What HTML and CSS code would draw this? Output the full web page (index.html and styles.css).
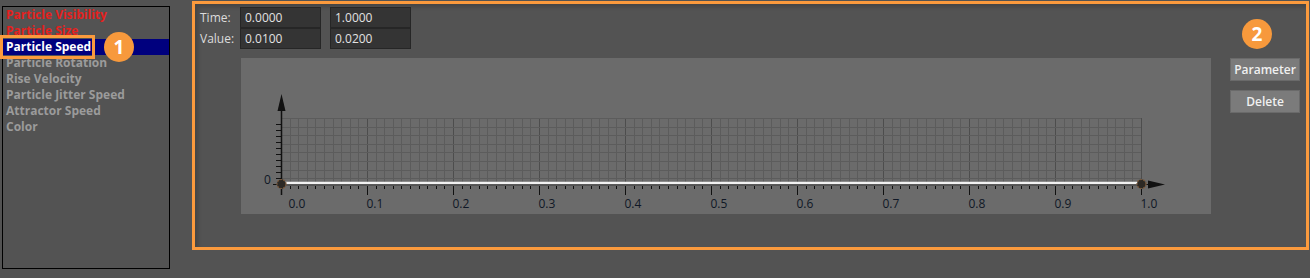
FILE: index.html
```html
<!DOCTYPE html>
<html lang="en">
<head>
<meta charset="UTF-8">
<title>Curve Editor</title>
<link rel="stylesheet" href="styles.css">
</head>
<body>

<div class="layout">
  <!-- список параметров -->
  <aside class="param-list">
    <div class="param-item used">Particle Visibility</div>
    <div class="param-item used">Particle Size</div>
    <div class="param-item selected"><span class="mark">Particle Speed</span></div>
    <div class="param-item">Particle Rotation</div>
    <div class="param-item">Rise Velocity</div>
    <div class="param-item">Particle Jitter Speed</div>
    <div class="param-item">Attractor Speed</div>
    <div class="param-item">Color</div>
    <span class="badge badge-one">1</span>
  </aside>

  <!-- редактор кривой -->
  <section class="editor">
    <div class="editor-main">
      <div class="key-form">
        <div class="key-row">
          <span class="key-label">Time:</span>
          <input class="key-input" type="text" value="0.0000">
          <input class="key-input" type="text" value="1.0000">
        </div>
        <div class="key-row">
          <span class="key-label">Value:</span>
          <input class="key-input" type="text" value="0.0100">
          <input class="key-input" type="text" value="0.0200">
        </div>
      </div>

      <div class="graph">
        <svg id="graph" width="970" height="156" viewBox="0 0 970 156"></svg>
      </div>
    </div>

    <div class="editor-side">
      <button class="btn">Parameter</button>
      <button class="btn">Delete</button>
    </div>
    <span class="badge badge-two">2</span>
  </section>
</div>

<script>
var svg = document.getElementById('graph');
var x0 = 40, x1 = 900, baseY = 126, gridTop = 60;
var out = '';

// сетка
for (var i = 0; i <= 100; i++) {
  var x = Math.round(x0 + i * 8.6) + 0.5;
  var major = i % 10 === 0;
  out += '<line x1="' + x + '" y1="' + gridTop + '" x2="' + x + '" y2="' + baseY + '" stroke="' + (major ? '#4d4d4d' : '#5c5c5c') + '" stroke-width="1"/>';
}
for (var y = gridTop; y < baseY - 2; y += 8.6) {
  var yy = Math.round(y) + 0.5;
  out += '<line x1="' + x0 + '" y1="' + yy + '" x2="' + x1 + '" y2="' + yy + '" stroke="#5c5c5c" stroke-width="1"/>';
}

// деления по X
for (var i = 0; i <= 100; i++) {
  var x = Math.round(x0 + i * 8.6) + 0.5;
  var major = i % 10 === 0;
  out += '<line x1="' + x + '" y1="128" x2="' + x + '" y2="' + (major ? 137 : 131) + '" stroke="#111" stroke-width="1"/>';
  if (major) {
    var lx = i === 0 ? x + 7 : x - 1;
    out += '<text x="' + lx + '" y="150" class="axis-label">' + (i / 100).toFixed(1) + '</text>';
  }
}

// деления по Y
for (var t = 66; t <= 120; t += 6) {
  out += '<line x1="35" y1="' + (t + 0.5) + '" x2="40" y2="' + (t + 0.5) + '" stroke="#111" stroke-width="1"/>';
}
out += '<text x="23" y="126" class="axis-label">0</text>';
out += '<line x1="32" y1="126.5" x2="40" y2="126.5" stroke="#111" stroke-width="1"/>';

// оси
out += '<line x1="40.5" y1="50" x2="40.5" y2="137" stroke="#111" stroke-width="1.5"/>';
out += '<polygon points="40.5,36 36.5,53 44.5,53" fill="#111"/>';
out += '<line x1="40" y1="126.5" x2="910" y2="126.5" stroke="#111" stroke-width="1.2"/>';
out += '<polygon points="924,126.5 907,122.5 907,130.5" fill="#111"/>';

// кривая
out += '<line x1="40" y1="127" x2="900" y2="127" stroke="#3c3c3c" stroke-width="1"/>';
out += '<line x1="40" y1="125" x2="900" y2="125" stroke="#f2f2f2" stroke-width="2.5"/>';
out += '<circle cx="40.5" cy="126" r="4.5" fill="#2d2924" stroke="#7b5a3c" stroke-width="1.2" stroke-dasharray="2 1.2"/>';
out += '<circle cx="900.5" cy="126" r="4.5" fill="#2d2924" stroke="#7b5a3c" stroke-width="1.2" stroke-dasharray="2 1.2"/>';

svg.innerHTML = out;
</script>

</body>
</html>
```

FILE: styles.css
```css
body, html {
  margin: 0;
  padding: 0;
  background-color: #535353;
  font-family: 'Open Sans', 'DejaVu Sans', sans-serif;
}

.layout {
  display: flex;
  align-items: flex-start;
  height: 278px;
}

.param-list {
  position: relative;
  box-sizing: border-box;
  width: 168px;
  height: 263px;
  margin: 6px 0 0 2px;
  border: 1px solid #000;
  padding-top: 0;
}

.param-item {
  height: 16px;
  line-height: 16px;
  padding-left: 3px;
  font-size: 12px;
  font-weight: bold;
  color: #9b9b9b;
  white-space: nowrap;
}

.param-item.used {
  color: #e4211e;
}

.param-item.selected {
  background-color: #00007e;
  color: #ffffff;
}

.mark {
  position: relative;
}

.mark::after {
  content: "";
  position: absolute;
  left: -6px;
  right: -4px;
  top: -3px;
  bottom: -4px;
  border: 3px solid #fb9a3d;
}

.badge {
  position: absolute;
  width: 30px;
  height: 30px;
  border-radius: 50%;
  background-color: #f7993c;
  color: #fff;
  font-size: 19px;
  font-weight: bold;
  line-height: 30px;
  text-align: center;
}

.badge-one {
  left: 101px;
  top: 25px;
}

.badge-two {
  left: 1047px;
  top: 15px;
}

.editor {
  position: relative;
  box-sizing: border-box;
  display: flex;
  width: 1117px;
  height: 249px;
  margin: 1px 0 0 22px;
  border: 3px solid #fb9a3d;
  box-shadow: inset 3px 3px 4px rgba(0,0,0,0.18);
}

.editor-main {
  padding: 3px 0 0 5px;
}

.key-row {
  display: flex;
  align-items: center;
  height: 21px;
}

.key-label {
  width: 40px;
  font-size: 12px;
  color: #dcdcdc;
}

.key-input {
  box-sizing: border-box;
  width: 81px;
  height: 21px;
  margin: 0 9px 0 0;
  padding: 0 4px;
  background-color: #343434;
  border: 1px solid #262626;
  color: #e2e2e2;
  font-family: 'Open Sans', 'DejaVu Sans', sans-serif;
  font-size: 12px;
  outline: none;
}

.graph {
  margin: 9px 0 0 41px;
  width: 970px;
  height: 156px;
  background-color: #6b6b6b;
}

.graph svg {
  display: block;
}

.axis-label {
  font-family: 'Open Sans', 'DejaVu Sans', sans-serif;
  font-size: 12px;
  fill: #101826;
}

.editor-side {
  display: flex;
  flex-direction: column;
  gap: 9px;
  padding: 54px 0 0 19px;
}

.btn {
  box-sizing: border-box;
  width: 70px;
  height: 23px;
  padding: 0;
  background-color: #7b7b7b;
  border: 1px solid #6a6a6a;
  color: #f0f0f0;
  font-family: 'Open Sans', 'DejaVu Sans', sans-serif;
  font-size: 12px;
  font-weight: 600;
}
```
